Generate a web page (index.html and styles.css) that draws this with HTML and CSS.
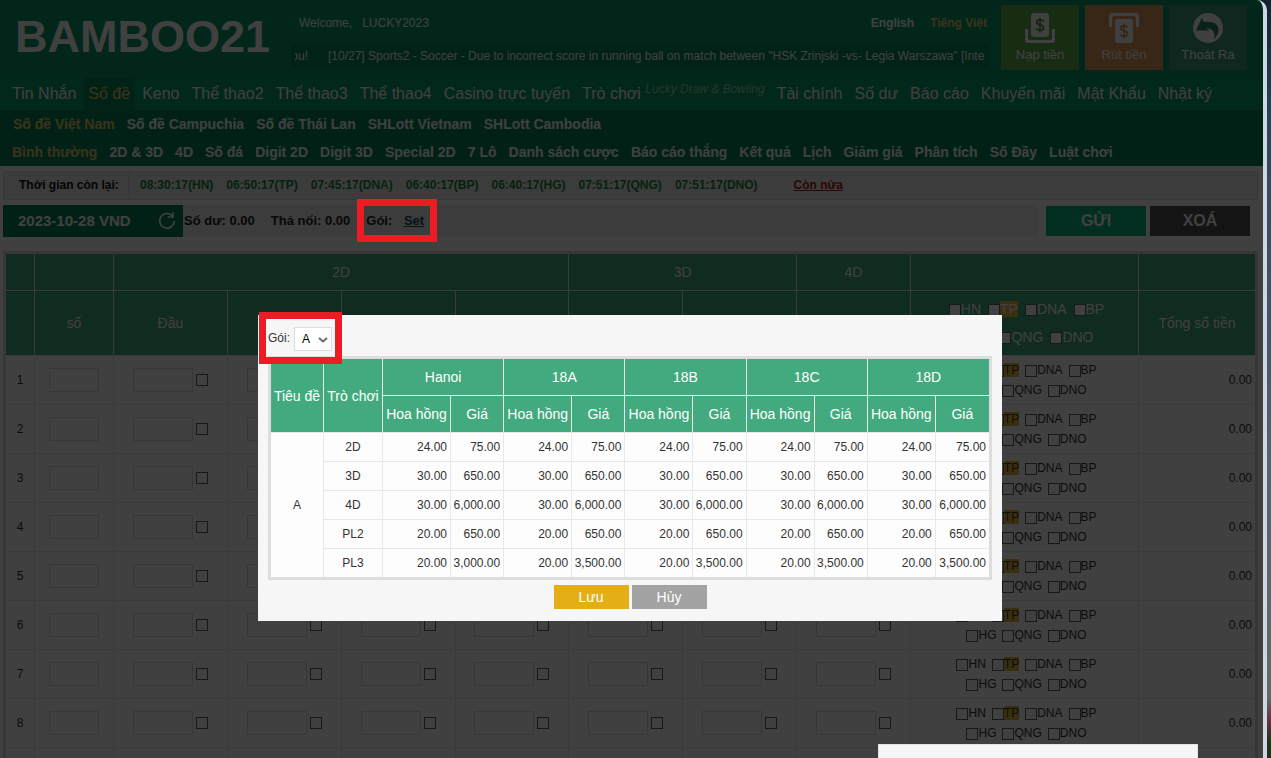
FILE: index.html
```html
<!DOCTYPE html>
<html lang="vi">
<head>
<meta charset="utf-8">
<title>BAMBOO21</title>
<link rel="stylesheet" href="styles.css">
</head>
<body>
<div class="desktop">
<div class="page">
  <header>
    <div class="top">
      <h1 class="logo">BAMBOO21</h1>
      <div class="info">
        <div class="welcome">
          <span>Welcome,</span><span>LUCKY2023</span>
          <span class="langs"><a href="#">English</a><a href="#" class="on">Tiếng Việt</a></span>
        </div>
        <div class="ticker"><p>ou!</p><p>[10/27] Sports2 - Soccer - Due to incorrect score in running ball on match between "HSK Zrinjski -vs- Legia Warszawa" [Inte</p></div>
      </div>
      <div class="actions">
        <a href="#" class="tile deposit">
          <svg width="30" height="30" viewBox="0 0 30 30"><path d="M0 16h3v9q0 2 2 2h20q2 0 2-2v-9h3v11q0 3-3 3H3q-3 0-3-3z" fill="#fff"/><rect x="6" y="0" width="18" height="24" rx="3" fill="#fff"/><path d="M18.500 8.500q-1-1.800-3.500-1.800-3.300 0-3.300 2.500 0 2 3.300 2.600 3.600.6 3.600 3 0 2.500-3.600 2.500-2.800 0-3.700-2M15 4.500v15" class="dollar"/></svg>
          <span>Nạp tiền</span></a>
        <a href="#" class="tile withdraw">
          <svg width="30" height="30" viewBox="0 0 30 30"><path d="M0 14V3q0-3 3-3h24q3 0 3 3v11h-3V5q0-2-2-2H5q-2 0-2 2v9z" fill="#fff"/><rect x="6" y="6" width="18" height="24" rx="3" fill="#fff"/><path d="M18.500 14.500q-1-1.800-3.500-1.800-3.300 0-3.300 2.500 0 2 3.300 2.600 3.600.6 3.600 3 0 2.500-3.600 2.500-2.800 0-3.700-2M15 10.500v15" class="dollar"/></svg>
          <span>Rút tiền</span></a>
        <a href="#" class="tile logout">
          <svg width="30" height="30" viewBox="0 0 30 30"><circle cx="15" cy="15" r="15" fill="#fff"/><path d="M3 17.500L9 4.500l1.500 4.500Q24 7 25.500 16q.5 5-4.500 10 2.500-10-8-11l3.500 2.500z" fill="#2f7f63"/></svg>
          <span>Thoát Ra</span></a>
      </div>
    </div>
    <nav class="main-nav">
      <a href="#">Tin Nhắn</a><a href="#" class="on">Số đề</a><a href="#">Keno</a><a href="#">Thể thao2</a><a href="#">Thể thao3</a><a href="#">Thể thao4</a><a href="#">Casino trực tuyến</a><a href="#">Trò chơi <i>Lucky Draw &amp; Bowling</i></a><a href="#">Tài chính</a><a href="#">Số dư</a><a href="#">Báo cáo</a><a href="#">Khuyến mãi</a><a href="#">Mật Khẩu</a><a href="#">Nhật ký</a>
    </nav>
    <div class="subnavs">
      <nav class="sub-nav"><a href="#" class="on">Số đề Việt Nam</a><a href="#">Số đề Campuchia</a><a href="#">Số đề Thái Lan</a><a href="#">SHLott Vietnam</a><a href="#">SHLott Cambodia</a></nav>
      <nav class="sub-nav"><a href="#" class="on">Bình thường</a><a href="#">2D &amp; 3D</a><a href="#">4D</a><a href="#">Số đá</a><a href="#">Digit 2D</a><a href="#">Digit 3D</a><a href="#">Special 2D</a><a href="#">7 Lô</a><a href="#">Danh sách cược</a><a href="#">Báo cáo thắng</a><a href="#">Kết quả</a><a href="#">Lịch</a><a href="#">Giảm giá</a><a href="#">Phân tích</a><a href="#">Số Đầy</a><a href="#">Luật chơi</a></nav>
    </div>
  </header>
  <main>
    <section class="times">
      <strong>Thời gian còn lại:</strong>
      <div class="clocks"><span>08:30:17(HN)</span><span>06:50:17(TP)</span><span>07:45:17(DNA)</span><span>06:40:17(BP)</span><span>06:40:17(HG)</span><span>07:51:17(QNG)</span><span>07:51:17(DNO)</span></div>
      <a href="#">Còn nửa</a>
    </section>
    <section class="status">
      <div class="date"><span>2023-10-28 VND</span>
        <button type="button" class="refresh" aria-label="Refresh"><svg width="18" height="18" viewBox="0 0 18 18"><path d="M14.500 4A7.300 7.300 0 1 0 16.300 9M15 0v5h-5.500" fill="none" stroke="#fff" stroke-width="1.600"/></svg></button></div>
      <div class="balance"><span>Số dư: 0.00</span><span>Thả nổi: 0.00</span><span class="pack">Gói: <a href="#">Set</a></span></div>
      <button type="button" class="send">GỬI</button><button type="button" class="clear">XOÁ</button>
    </section>
    <table class="bets">
      <colgroup><col class="c-no"><col class="c-num"><col span="7"><col class="c-area"><col class="c-total"></colgroup>
      <thead>
        <tr class="h1"><th></th><th></th><th colspan="4">2D</th><th colspan="2">3D</th><th>4D</th><th></th><th></th></tr>
        <tr class="h2"><th></th><th>số</th><th>Đầu</th><th></th><th></th><th></th><th></th><th></th><th></th><th class="areas"></th><th>Tổng số tiền</th></tr>
      </thead>
      <tbody id="rows"></tbody>
    </table>
  </main>
  <div class="overlay">
    <div class="dialog" role="dialog" aria-label="Gói">
      <div class="choose"><label for="pack">Gói:</label>
        <span class="select"><select id="pack"><option>A</option></select><svg width="10" height="6" viewBox="0 0 10 6"><path d="M1 1l4 3.500L9 1" fill="none" stroke="#666" stroke-width="1.800"/></svg></span></div>
      <table class="prices">
        <colgroup><col class="p-title"><col class="p-game"><col class="p-com"><col class="p-price"><col class="p-com"><col class="p-price"><col class="p-com"><col class="p-price"><col class="p-com"><col class="p-price"><col class="p-com"><col class="p-price"></colgroup>
        <thead>
          <tr><th rowspan="2">Tiêu đề</th><th rowspan="2">Trò chơi</th><th colspan="2">Hanoi</th><th colspan="2">18A</th><th colspan="2">18B</th><th colspan="2">18C</th><th colspan="2">18D</th></tr>
          <tr><th>Hoa hồng</th><th>Giá</th><th>Hoa hồng</th><th>Giá</th><th>Hoa hồng</th><th>Giá</th><th>Hoa hồng</th><th>Giá</th><th>Hoa hồng</th><th>Giá</th></tr>
        </thead>
        <tbody>
          <tr><td rowspan="5" class="mid">A</td><td class="mid">2D</td><td>24.00</td><td>75.00</td><td>24.00</td><td>75.00</td><td>24.00</td><td>75.00</td><td>24.00</td><td>75.00</td><td>24.00</td><td>75.00</td></tr>
          <tr><td class="mid">3D</td><td>30.00</td><td>650.00</td><td>30.00</td><td>650.00</td><td>30.00</td><td>650.00</td><td>30.00</td><td>650.00</td><td>30.00</td><td>650.00</td></tr>
          <tr><td class="mid">4D</td><td>30.00</td><td>6,000.00</td><td>30.00</td><td>6,000.00</td><td>30.00</td><td>6,000.00</td><td>30.00</td><td>6,000.00</td><td>30.00</td><td>6,000.00</td></tr>
          <tr><td class="mid">PL2</td><td>20.00</td><td>650.00</td><td>20.00</td><td>650.00</td><td>20.00</td><td>650.00</td><td>20.00</td><td>650.00</td><td>20.00</td><td>650.00</td></tr>
          <tr><td class="mid">PL3</td><td>20.00</td><td>3,000.00</td><td>20.00</td><td>3,500.00</td><td>20.00</td><td>3,500.00</td><td>20.00</td><td>3,500.00</td><td>20.00</td><td>3,500.00</td></tr>
        </tbody>
      </table>
      <div class="buttons"><button type="button" class="save">Lưu</button><button type="button" class="cancel">Hủy</button></div>
    </div>
  </div>
  <div class="mark mark-set"></div>
  <div class="mark mark-pack"></div>
  <div class="toast"></div>
</div>
</div>
<script src="app.js"></script>
</body>
</html>
```
FILE: styles.css
```css
* { box-sizing: border-box; }
body { margin: 0; font: 12px/16px "Liberation Sans", Arial, sans-serif; color: #333; }
a { color: inherit; text-decoration: none; }
button { border: 0; padding: 0; font: inherit; color: #fff; }
p { margin: 0; }
.desktop { height: 100vh; padding-right: 4px; overflow: hidden; background: linear-gradient(#14202e 0, #2a4258 15%, #38455c 22%, #585f6e 60%, #6b6662 92%, #6a3040 95%, #22301c 98%); }
.page { position: relative; height: 100%; overflow: hidden; background: #fff; border-right: 4px solid #cbd9e4; border-top-right-radius: 10px; }
header { color: #fff; }
.top { display: flex; height: 77px; background: #089b69; }
.logo { margin: 0; padding-left: 15px; width: 291px; flex: none; font-size: 45px; line-height: 74px; font-weight: bold; }
.info { flex: 1; min-width: 0; }
.welcome { display: flex; gap: 10px; height: 43px; align-items: center; padding: 2px 2px 0 8px; }
.langs { margin-left: auto; display: flex; gap: 16px; font-weight: bold; }
.on { color: #e8cc68; }
.ticker { display: flex; gap: 20px; height: 26px; line-height: 26px; padding: 0 4px; background: #06875a; overflow: hidden; white-space: nowrap; }
.ticker p:first-child { width: 13px; flex: none; display: flex; justify-content: flex-end; overflow: hidden; }
.actions { display: flex; gap: 6px; padding: 5px 16px 0 12px; }
.tile { width: 78px; height: 65px; padding-top: 8px; display: flex; flex-direction: column; align-items: center; gap: 4px; font-size: 13px; }
.deposit { background: #5cb04c; }
.withdraw { background: #de9858; }
.logout { background: #3f9a7c; }
.dollar { fill: none; stroke: #55a03c; stroke-width: 1.8; }
.withdraw .dollar { stroke: #de9858; }
.main-nav { display: flex; gap: 4px; height: 33px; padding-left: 8px; border-top: 1px solid #07905f; background: #089b6b; font-size: 16px; line-height: 32px; white-space: nowrap; }
.main-nav a { padding: 0 4px; }
.main-nav .on { background: #06865b; }
.main-nav i { font-size: 12px; color: #8ae0a8; vertical-align: 6px; line-height: 12px; }
.subnavs { background: #05845a; }
.sub-nav { display: flex; gap: 12px; height: 28px; padding-left: 12px; font-size: 14px; font-weight: bold; line-height: 28px; white-space: nowrap; }
.sub-nav:first-child { padding-left: 13px; }
main { padding: 5px 5px 0 3px; }
.times { display: flex; height: 29px; line-height: 27px; border: 1px solid #dcdcdc; background: #ededed; font-weight: bold; color: #111; }
.times strong { width: 125px; padding-left: 15px; border-right: 1px solid #dcdcdc; }
.clocks { display: flex; gap: 13px; padding-left: 11px; color: #108a36; }
.times > a { margin-left: 36px; color: #b01818; text-decoration: underline; }
.status { display: flex; margin: 5px 0 14px; height: 32px; align-items: center; }
.date { display: flex; justify-content: space-between; align-items: center; width: 180px; height: 32px; padding: 0 7px 0 15px; background: #04845a; color: #fff; font-size: 15px; font-weight: bold; }
.refresh { width: 18px; height: 18px; background: none; }
.refresh svg { display: block; }
.balance { flex: 1; display: flex; gap: 16px; height: 32px; line-height: 32px; margin-right: 8px; padding-left: 1px; background: #ededed; font-size: 13px; font-weight: bold; color: #222; }
.pack a { margin-left: 8px; color: #184c64; text-decoration: underline; }
.send, .clear { width: 100px; height: 30px; font-size: 16px; font-weight: bold; }
.send { background: #06b880; }
.clear { margin: 0 8px 0 4px; background: #505050; }
table { border-collapse: separate; border-spacing: 0; table-layout: fixed; }
th { font-weight: normal; font-size: 14px; color: #fff; background: #42aa7e; }
th, td { padding: 0; border-right: 1px solid #e8e8e8; border-bottom: 1px solid #e8e8e8; }
tr > :last-child { border-right: 0; }
.bets { width: 100%; border: 3px solid #dcdcdc; text-align: center; }
.bets td { height: 49px; background: #fdfdfd; }
.c-no { width: 29px; }
.c-num { width: 79px; }
.c-area { width: 228px; }
.c-total { width: 116px; }
.h1 th { height: 37px; }
.h2 th { height: 65px; }
.bets input { margin: 0; vertical-align: middle; }
.bets input[type=text] { width: 60px; height: 24px; border: 1px solid #dcdcdc; background: #fff; }
.bets input.number { width: 50px; }
.bets input[type=checkbox] { appearance: none; width: 12px; height: 12px; border: 1px solid #606060; background: #fff; }
.bets td > input[type=checkbox] { margin-left: 3px; }
.area-line { display: flex; justify-content: center; gap: 6px; height: 20px; padding-left: 4px; line-height: 14px; align-items: center; }
.area-line label { display: flex; align-items: center; }
.bets .area-line input { margin: 2px 0 0; }
.hot { background: #e3b938; }
th .area-line { height: 28px; line-height: 16px; gap: 7px; }
.bets .total { text-align: right; padding-right: 3px; }
.overlay { position: absolute; inset: 0; padding: 315px 3px 0 0; background: rgba(0, 0, 0, .75); }
.dialog { width: 744px; max-width: 100%; margin: 0 auto; padding: 12px 10px; background: #f6f6f6; }
.choose { display: flex; align-items: flex-start; gap: 4px; height: 29px; line-height: 22px; }
.select { position: relative; display: flex; }
.select svg { position: absolute; right: 4px; top: 10px; pointer-events: none; }
.select select { appearance: none; width: 38px; height: 24px; padding: 0 7px; border: 1px solid #ddd; border-radius: 0; background: #fff; font: inherit; color: #000; }
.prices { width: 100%; border: 3px solid #ddd; }
.prices th { height: 37px; white-space: nowrap; }
.prices td { height: 29px; padding-right: 3px; text-align: right; background: #fdfdfd; }
.prices tbody tr:last-child td, .prices td[rowspan] { border-bottom: 0; }
.prices tbody tr:last-child td { height: 28px; }
.prices .mid { text-align: center; padding: 0; }
.p-title { width: 53px; }
.p-game { width: 59px; }
.p-com { width: 68px; }
.buttons { display: flex; justify-content: center; gap: 3px; padding-top: 5px; }
.buttons button { width: 75px; height: 24px; font-size: 14px; }
.save { background: #e4ae17; }
.cancel { background: #a3a3a3; }
.mark { position: absolute; border: 7px solid #ed1c24; }
.mark-set { left: 357px; top: 199px; width: 80px; height: 43px; }
.mark-pack { left: 259px; top: 312px; width: 83px; height: 52px; }
.toast { position: absolute; right: 65px; bottom: 0; width: 320px; height: 14px; background: #f6f6f6; border: 1px solid #e4e4e4; border-bottom: 0; }
```
FILE: app.js
```js
const lines = [['HN', 'TP', 'DNA', 'BP'], ['HG', 'QNG', 'DNO']];
const areas = lines.map(line => '<div class="area-line">' + line.map(name =>
  `<label><input type="checkbox"><span class="${name === 'TP' ? 'hot' : ''}">${name}</span></label>`).join('') + '</div>').join('');
document.querySelector('.areas').innerHTML = areas;
let html = '';
for (let i = 1; i <= 8; i++) {
  const bets = '<td><input type="text" aria-label="Tiền"><input type="checkbox" aria-label="Chọn"></td>'.repeat(7);
  html += `<tr><td>${i}</td><td><input type="text" class="number" aria-label="Số"></td>${bets}<td>${areas}</td><td class="total">0.00</td></tr>`;
}
html += '<tr>' + '<td></td>'.repeat(11) + '</tr>';
document.getElementById('rows').innerHTML = html;
```
